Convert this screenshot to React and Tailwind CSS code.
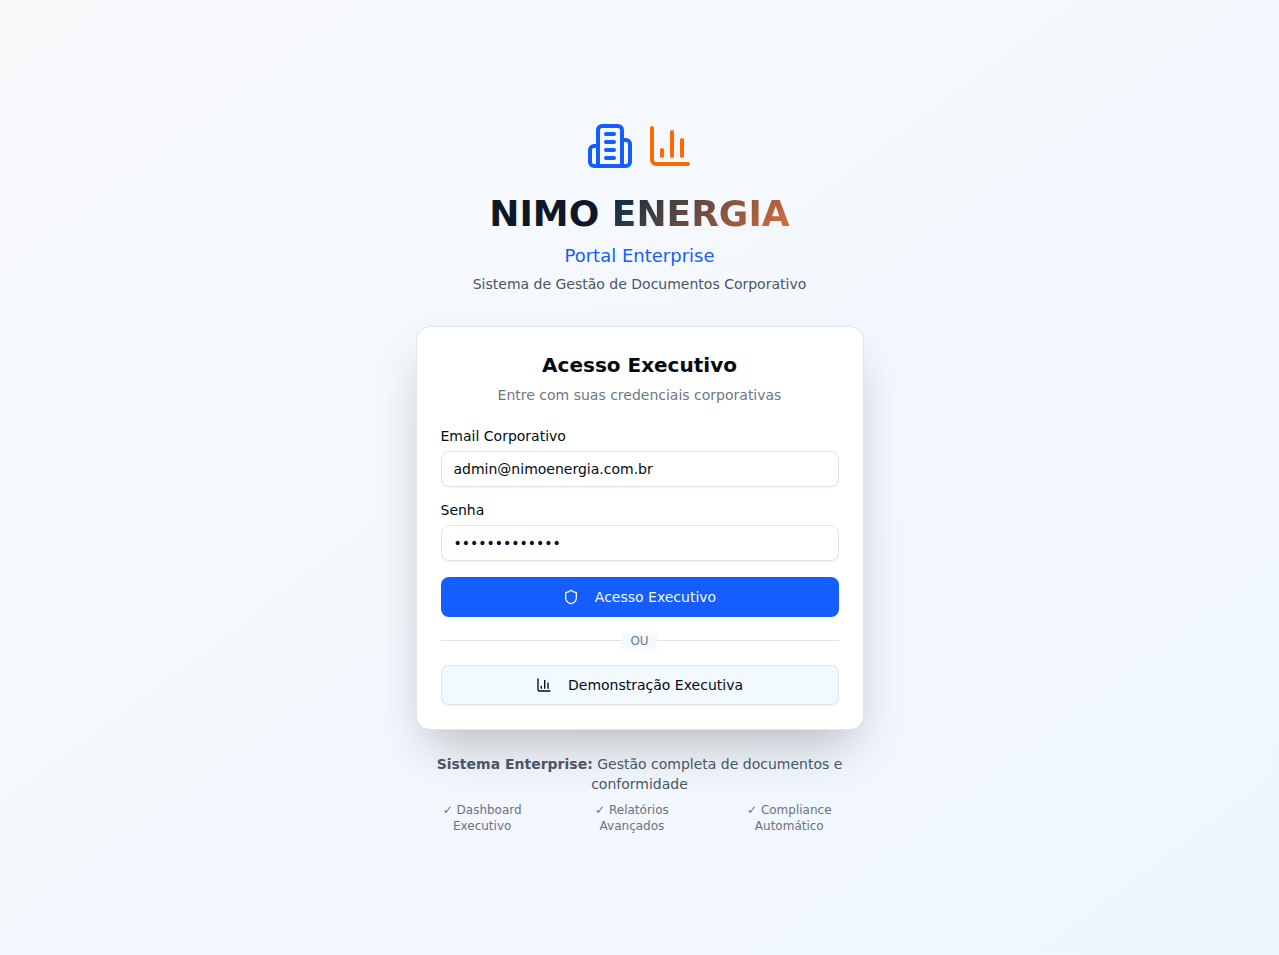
import { ChartColumn, Shield } from "lucide-react";

const highlights = ["Dashboard Executivo", "Relatórios Avançados", "Compliance Automático"];

function BuildingIcon({ className }) {
  return (
    <svg
      viewBox="0 0 24 24"
      fill="none"
      stroke="currentColor"
      strokeWidth="2"
      strokeLinecap="round"
      strokeLinejoin="round"
      aria-hidden="true"
      className={className}
    >
      <path d="M6 22V4a2 2 0 0 1 2-2h8a2 2 0 0 1 2 2v18Z" />
      <path d="M6 12H4a2 2 0 0 0-2 2v6a2 2 0 0 0 2 2h2" />
      <path d="M18 9h2a2 2 0 0 1 2 2v9a2 2 0 0 1-2 2h-2" />
      <path d="M10 6h4" />
      <path d="M10 10h4" />
      <path d="M10 14h4" />
      <path d="M10 18h4" />
    </svg>
  );
}

function Field({ id, label, type, value }) {
  return (
    <div className="flex flex-col gap-2">
      <label htmlFor={id} className="text-sm leading-[14px] font-medium text-[#020b12]">{label}</label>
      <input
        id={id}
        type={type}
        defaultValue={value}
        className="h-9 w-full rounded-lg border border-[#dde4ea] bg-white px-3 py-1 text-sm text-[#020b12] shadow-xs outline-none focus:border-blue-500"
      />
    </div>
  );
}

export default function App() {
  return (
    <div className="flex min-h-screen items-center justify-center bg-linear-to-br from-slate-50 to-blue-50 p-4 font-['DejaVu_Sans',sans-serif]">
      <div className="w-full max-w-md">
        <header className="mb-8 text-center">
          <div className="mb-6 flex items-center justify-center gap-3">
            <BuildingIcon className="size-12 text-[#155dfc]" />
            <ChartColumn className="size-12 text-[#ff6900]" />
          </div>
          <h1 className="mb-2 text-4xl font-bold text-gray-900">
            NIMO{" "}
            <span className="bg-[linear-gradient(135deg,#002b45,#de703c)] bg-clip-text text-transparent">ENERGIA</span>
          </h1>
          <p className="mb-1 text-lg font-medium text-[#155dfc]">Portal Enterprise</p>
          <p className="text-sm text-[#4a5565]">Sistema de Gestão de Documentos Corporativo</p>
        </header>

        <main className="rounded-[14px] border border-[#dde4ea] bg-white p-6 shadow-2xl">
          <div className="mb-6 flex flex-col gap-[6px] text-center">
            <h2 className="text-xl font-semibold text-[#020b12]">Acesso Executivo</h2>
            <p className="text-sm text-[#6b7885]">Entre com suas credenciais corporativas</p>
          </div>
          <div className="flex flex-col gap-4">
            <form className="flex flex-col gap-4" onSubmit={(e) => e.preventDefault()}>
              <Field id="email" label="Email Corporativo" type="email" value="admin@nimoenergia.com.br" />
              <Field id="password" label="Senha" type="password" value="nimoadmin2024" />
              <button
                type="submit"
                className="flex h-10 items-center justify-center gap-4 rounded-lg bg-[#155dfc] text-sm font-medium text-[#f2f9ff]"
              >
                <Shield className="size-4" />
                Acesso Executivo
              </button>
            </form>
            <div className="flex items-center text-xs text-[#6b7885]">
              <span className="h-px flex-1 bg-[#dde4ea]" />
              <span className="bg-[#f2f9ff] px-2">OU</span>
              <span className="h-px flex-1 bg-[#dde4ea]" />
            </div>
            <button
              type="button"
              className="flex h-10 items-center justify-center gap-4 rounded-lg border border-[#dde4ea] bg-[#f2f9ff] text-sm font-medium text-[#020b12] shadow-xs"
            >
              <ChartColumn className="size-4" />
              Demonstração Executiva
            </button>
          </div>
        </main>

        <footer className="mt-6 flex flex-col gap-2 text-center">
          <p className="text-sm text-[#4a5565]">
            <strong>Sistema Enterprise:</strong> Gestão completa de documentos e conformidade
          </p>
          <ul className="flex justify-center gap-4 text-xs text-[#6a7282]">
            {highlights.map((item) => (
              <li key={item}>✓ {item}</li>
            ))}
          </ul>
        </footer>
      </div>
    </div>
  );
}
